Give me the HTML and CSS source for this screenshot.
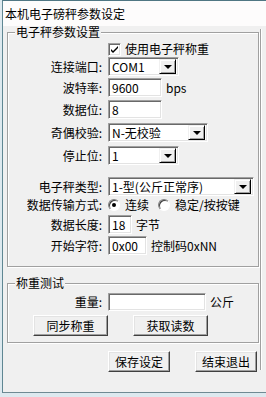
FILE: index.html
```html
<!DOCTYPE html>
<html lang="zh">
<head>
  <meta charset="UTF-8">
  <title>本机电子磅秤参数设定</title>
  <link rel="stylesheet" href="styles.css">
</head>
<body>
<div class="window">
  <div class="titlebar">本机电子磅秤参数设定</div>
  <div class="frame">
    <div class="dialog">
      <fieldset class="group group-main">
        <legend>电子秤参数设置</legend>
        <div class="row row-check">
          <span class="label"></span>
          <span class="checkbox"><svg width="9" height="9" viewBox="0 0 9 9"><path d="M1 4 L3 6 L8 1 L8 3 L3 8 L1 6 Z" fill="#000"/></svg></span>
          <span class="check-text">使用电子秤称重</span>
        </div>
        <div class="row r1">
          <span class="label">连接端口:</span>
          <div class="field combo w71"><span class="value">COM1</span><span class="drop"><i></i></span></div>
        </div>
        <div class="row r2">
          <span class="label">波特率:</span>
          <div class="field w54"><span class="value">9600</span></div>
          <span class="unit">bps</span>
        </div>
        <div class="row r3">
          <span class="label">数据位:</span>
          <div class="field w54"><span class="value">8</span></div>
        </div>
        <div class="row r4">
          <span class="label">奇偶校验:</span>
          <div class="field combo w100"><span class="value">N-无校验</span><span class="drop"><i></i></span></div>
        </div>
        <div class="row r4">
          <span class="label">停止位:</span>
          <div class="field combo w71"><span class="value">1</span><span class="drop"><i></i></span></div>
        </div>
        <div class="row r5">
          <span class="label">电子秤类型:</span>
          <div class="field combo w146"><span class="value">1-型(公斤正常序)</span><span class="drop"><i></i></span></div>
        </div>
        <div class="row row-radio">
          <span class="label">数据传输方式:</span>
          <span class="radio on"></span><span class="radio-text">连续</span>
          <span class="radio"></span><span class="radio-text">稳定/按按键</span>
        </div>
        <div class="row r2">
          <span class="label">数据长度:</span>
          <div class="field w24"><span class="value">18</span></div>
          <span class="unit">字节</span>
        </div>
        <div class="row r2">
          <span class="label">开始字符:</span>
          <div class="field w39"><span class="value">0x00</span></div>
          <span class="unit">控制码0xNN</span>
        </div>
      </fieldset>

      <fieldset class="group group-test">
        <legend>称重测试</legend>
        <div class="row weight-row">
          <span class="label">重量:</span>
          <div class="field w98"></div>
          <span class="unit">公斤</span>
        </div>
        <div class="btn-row test-buttons">
          <button class="btn">同步称重</button>
          <button class="btn">获取读数</button>
        </div>
      </fieldset>

      <div class="btn-row footer">
        <button class="btn btn-small">保存设定</button>
        <button class="btn btn-small">结束退出</button>
      </div>
    </div>
    <div class="edge"></div>
  </div>
</div>
</body>
</html>
```

FILE: styles.css
```css
* {
  box-sizing: border-box;
}

body {
  margin: 0;
  background: #dde9ef;
  font-family: "Noto Sans CJK SC", "Liberation Sans", sans-serif;
  font-size: 12px;
  line-height: 14px;
  color: #000;
}

.window {
  margin-left: 2px;
  height: 393px;
  border-top: 1px solid #4f7683;
  border-left: 1px solid #5f8793;
  border-bottom: 1px solid #6f8a93;
  background: #f0f0f0;
  display: flex;
  flex-direction: column;
}

.titlebar {
  height: 25px;
  line-height: 25px;
  padding-left: 2px;
  background: #fdfcfc;
}

.frame {
  flex: 1;
  display: flex;
}

.dialog {
  width: 258px;
}

.edge {
  margin-top: 3px;
  margin-bottom: 22px;
  width: 6px;
  border-left: 1px solid #a0a0a0;
  box-shadow: inset 1px 0 #fff;
}

/* group boxes */
.group {
  margin: 0 0 0 4px;
  padding: 0;
  width: 252px;
  min-width: 0;
  border: 1px solid #a0a0a0;
  box-shadow: inset 1px 1px #fff, 1px 1px #fff;
}

.group legend {
  margin-left: 7px;
  padding: 0 1px;
  line-height: 12px;
  background: #f0f0f0;
}

.group-main {
  padding-bottom: 11px;
}

.group-test {
  margin-top: 10px;
  padding-bottom: 6px;
}

.row {
  display: flex;
  align-items: center;
  height: 19px;
}

.label {
  width: 100px;
  padding-right: 6px;
  text-align: right;
  white-space: nowrap;
  flex-shrink: 0;
}

.row-check {
  height: 14px;
  margin-top: 4px;
}

.r1 { margin-top: 1px; }
.r2 { margin-top: 2px; }
.r3 { margin-top: 3px; }
.r4 { margin-top: 4px; }
.r5 { margin-top: 12px; }

.row-radio {
  height: 17px;
}

.weight-row {
  margin-top: 4px;
  height: 18px;
}

/* sunken edit fields */
.field {
  height: 100%;
  background: #fff;
  border: 1px solid;
  border-color: #a0a0a0 #fff #fff #a0a0a0;
  box-shadow: inset 1px 1px #696969, inset -1px -1px #e3e3e3;
  padding: 0 2px 0 3px;
  display: flex;
  align-items: center;
  flex-shrink: 0;
}

.value {
  flex: 1;
  white-space: nowrap;
}

.w24 { width: 24px; }
.w39 { width: 39px; }
.w54 { width: 54px; }
.w71 { width: 71px; }
.w98 { width: 98px; }
.w100 { width: 100px; }
.w146 { width: 146px; }

.combo {
  padding-right: 2px;
}

.drop {
  width: 17px;
  height: 15px;
  flex-shrink: 0;
  background: #f0f0f0;
  border: 1px solid;
  border-color: #f0f0f0 #000 #000 #f0f0f0;
  box-shadow: inset 1px 1px #fff, inset -1px -1px #a0a0a0;
  display: flex;
  align-items: center;
  justify-content: center;
}

.drop i {
  width: 0;
  height: 0;
  border-left: 4px solid transparent;
  border-right: 4px solid transparent;
  border-top: 4px solid #000;
}

.unit {
  margin-left: 4px;
  white-space: nowrap;
}

/* check and radio */
.checkbox {
  width: 13px;
  height: 13px;
  background: #fff;
  border: 1px solid;
  border-color: #a0a0a0 #fff #fff #a0a0a0;
  box-shadow: inset 1px 1px #696969, inset -1px -1px #e3e3e3;
  display: flex;
  align-items: center;
  justify-content: center;
}

.check-text {
  margin-left: 4px;
}

.radio {
  width: 12px;
  height: 12px;
  border-radius: 50%;
  background: #fff;
  border: 1px solid;
  border-color: #808080 #fff #fff #808080;
  box-shadow: inset 1px 1px #404040;
  display: flex;
  align-items: center;
  justify-content: center;
  flex-shrink: 0;
}

.radio.on::after {
  content: "";
  width: 4px;
  height: 4px;
  border-radius: 50%;
  background: #000;
}

.radio-text {
  margin-left: 5px;
  margin-right: 9px;
}

/* buttons */
.btn-row {
  display: flex;
  gap: 25px;
}

.test-buttons {
  margin-top: 4px;
  margin-left: 25px;
}

.footer {
  margin-top: 8px;
  margin-left: 105px;
}

.btn {
  width: 75px;
  height: 21px;
  padding: 0;
  font: inherit;
  color: #000;
  background: #f0f0f0;
  border: 1px solid;
  border-color: #fff #404040 #404040 #fff;
  box-shadow: inset -1px -1px #a0a0a0, inset 1px 1px #e3e3e3;
}

.btn-small {
  width: 62px;
}
```
